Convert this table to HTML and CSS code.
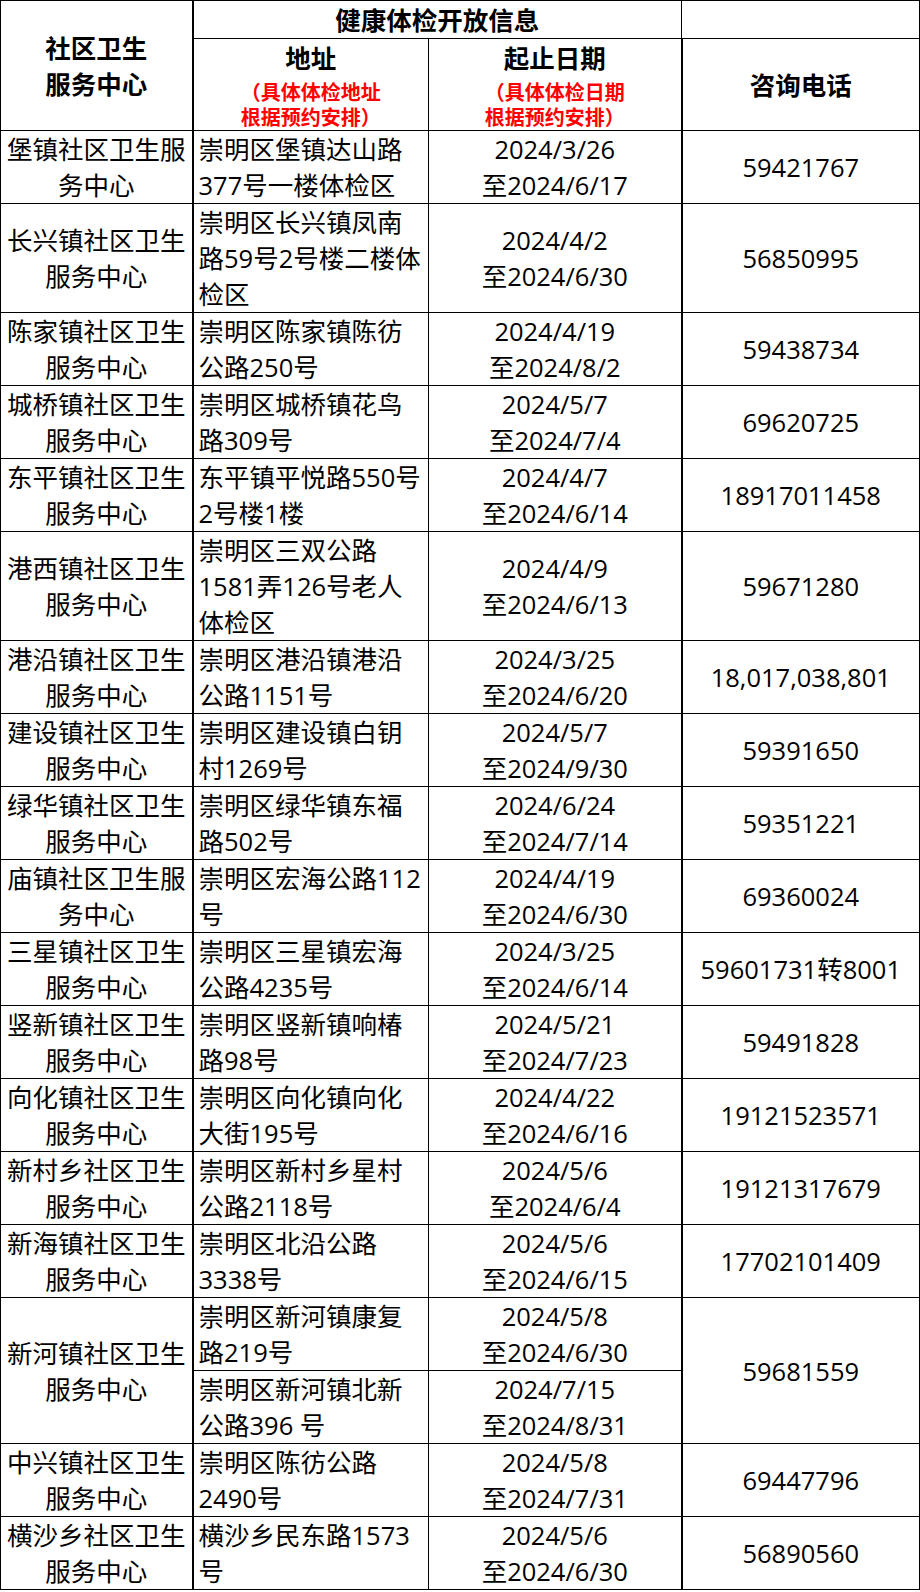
FILE: index.html
```html
<!DOCTYPE html>
<html lang="zh-CN">
<head>
<meta charset="utf-8">
<title>健康体检开放信息</title>
<link rel="stylesheet" href="styles.css">
</head>
<body>
<table class="sheet">
  <colgroup>
    <col class="c-name">
    <col class="c-addr">
    <col class="c-date">
    <col class="c-tel">
  </colgroup>
  <thead>
    <tr class="h1">
      <th rowspan="2" class="name">社区卫生<br>服务中心</th>
      <th colspan="2" class="title">健康体检开放信息</th>
      <th class="blank"></th>
    </tr>
    <tr class="h2">
      <th class="sub">
        <div class="sub-main">地址</div>
        <div class="note">（具体体检地址<br>根据预约安排）</div>
      </th>
      <th class="sub">
        <div class="sub-main">起止日期</div>
        <div class="note">（具体体检日期<br>根据预约安排）</div>
      </th>
      <th class="tel-h">咨询电话</th>
    </tr>
  </thead>
  <tbody>
    <tr><td class="name">堡镇社区卫生服<br>务中心</td><td class="addr">崇明区堡镇达山路<br>377号一楼体检区</td><td class="date">2024/3/26<br>至2024/6/17</td><td class="tel">59421767</td></tr>
    <tr class="tall"><td class="name">长兴镇社区卫生<br>服务中心</td><td class="addr">崇明区长兴镇凤南<br>路59号2号楼二楼体<br>检区</td><td class="date">2024/4/2<br>至2024/6/30</td><td class="tel">56850995</td></tr>
    <tr><td class="name">陈家镇社区卫生<br>服务中心</td><td class="addr">崇明区陈家镇陈彷<br>公路250号</td><td class="date">2024/4/19<br>至2024/8/2</td><td class="tel">59438734</td></tr>
    <tr><td class="name">城桥镇社区卫生<br>服务中心</td><td class="addr">崇明区城桥镇花鸟<br>路309号</td><td class="date">2024/5/7<br>至2024/7/4</td><td class="tel">69620725</td></tr>
    <tr><td class="name">东平镇社区卫生<br>服务中心</td><td class="addr">东平镇平悦路550号<br>2号楼1楼</td><td class="date">2024/4/7<br>至2024/6/14</td><td class="tel">18917011458</td></tr>
    <tr class="tall"><td class="name">港西镇社区卫生<br>服务中心</td><td class="addr">崇明区三双公路<br>1581弄126号老人<br>体检区</td><td class="date">2024/4/9<br>至2024/6/13</td><td class="tel">59671280</td></tr>
    <tr><td class="name">港沿镇社区卫生<br>服务中心</td><td class="addr">崇明区港沿镇港沿<br>公路1151号</td><td class="date">2024/3/25<br>至2024/6/20</td><td class="tel">18,017,038,801</td></tr>
    <tr><td class="name">建设镇社区卫生<br>服务中心</td><td class="addr">崇明区建设镇白钥<br>村1269号</td><td class="date">2024/5/7<br>至2024/9/30</td><td class="tel">59391650</td></tr>
    <tr><td class="name">绿华镇社区卫生<br>服务中心</td><td class="addr">崇明区绿华镇东福<br>路502号</td><td class="date">2024/6/24<br>至2024/7/14</td><td class="tel">59351221</td></tr>
    <tr><td class="name">庙镇社区卫生服<br>务中心</td><td class="addr">崇明区宏海公路112<br>号</td><td class="date">2024/4/19<br>至2024/6/30</td><td class="tel">69360024</td></tr>
    <tr><td class="name">三星镇社区卫生<br>服务中心</td><td class="addr">崇明区三星镇宏海<br>公路4235号</td><td class="date">2024/3/25<br>至2024/6/14</td><td class="tel">59601731转8001</td></tr>
    <tr><td class="name">竖新镇社区卫生<br>服务中心</td><td class="addr">崇明区竖新镇响椿<br>路98号</td><td class="date">2024/5/21<br>至2024/7/23</td><td class="tel">59491828</td></tr>
    <tr><td class="name">向化镇社区卫生<br>服务中心</td><td class="addr">崇明区向化镇向化<br>大街195号</td><td class="date">2024/4/22<br>至2024/6/16</td><td class="tel">19121523571</td></tr>
    <tr><td class="name">新村乡社区卫生<br>服务中心</td><td class="addr">崇明区新村乡星村<br>公路2118号</td><td class="date">2024/5/6<br>至2024/6/4</td><td class="tel">19121317679</td></tr>
    <tr><td class="name">新海镇社区卫生<br>服务中心</td><td class="addr">崇明区北沿公路<br>3338号</td><td class="date">2024/5/6<br>至2024/6/15</td><td class="tel">17702101409</td></tr>
    <tr><td class="name" rowspan="2">新河镇社区卫生<br>服务中心</td><td class="addr">崇明区新河镇康复<br>路219号</td><td class="date">2024/5/8<br>至2024/6/30</td><td class="tel" rowspan="2">59681559</td></tr>
    <tr><td class="addr">崇明区新河镇北新<br>公路396 号</td><td class="date">2024/7/15<br>至2024/8/31</td></tr>
    <tr><td class="name">中兴镇社区卫生<br>服务中心</td><td class="addr">崇明区陈彷公路<br>2490号</td><td class="date">2024/5/8<br>至2024/7/31</td><td class="tel">69447796</td></tr>
    <tr><td class="name">横沙乡社区卫生<br>服务中心</td><td class="addr">横沙乡民东路1573<br>号</td><td class="date">2024/5/6<br>至2024/6/30</td><td class="tel">56890560</td></tr>
  </tbody>
</table>
</body>
</html>
```

FILE: styles.css
```css
html, body {
  margin: 0;
  padding: 0;
  background: #fff;
}

body {
  font-family: "Open Sans", "Noto Sans CJK SC", sans-serif;
  font-size: 25.5px;
  color: #000;
}

.sheet {
  border-collapse: collapse;
  table-layout: fixed;
  width: 919px;
}

.c-name { width: 192px; }
.c-addr { width: 236px; }
.c-date { width: 253px; }
.c-tel  { width: 238px; }

.sheet th,
.sheet td {
  border: 1px solid #000;
  padding: 0;
  line-height: 36px;
  vertical-align: middle;
  white-space: nowrap;
  overflow: hidden;
}

.sheet th {
  font-weight: 700;
  text-align: center;
}

.h1 th { height: 37px; }
.h2 th { height: 89px; }

.sheet .sub {
  vertical-align: top;
  padding-top: 2px;
  overflow: visible;
}

.sub-main {
  line-height: 34px;
}

.note {
  margin-top: 5px;
  margin-bottom: -10px;
  color: #ff0000;
  font-size: 20px;
  line-height: 25px;
  font-weight: 700;
}

.sheet td {
  height: 72px;
}

.sheet tr.tall td {
  height: 108px;
}

.sheet td.name {
  text-align: center;
}

.sheet td.addr {
  text-align: left;
  padding-left: 5px;
}

.sheet td.date,
.sheet td.tel {
  text-align: center;
}

.sheet td.name,
.sheet th.name {
  border-right-width: 2px;
}

.sheet td.date,
.sheet th.sub:nth-child(2) {
  border-right-width: 2px;
}
```
